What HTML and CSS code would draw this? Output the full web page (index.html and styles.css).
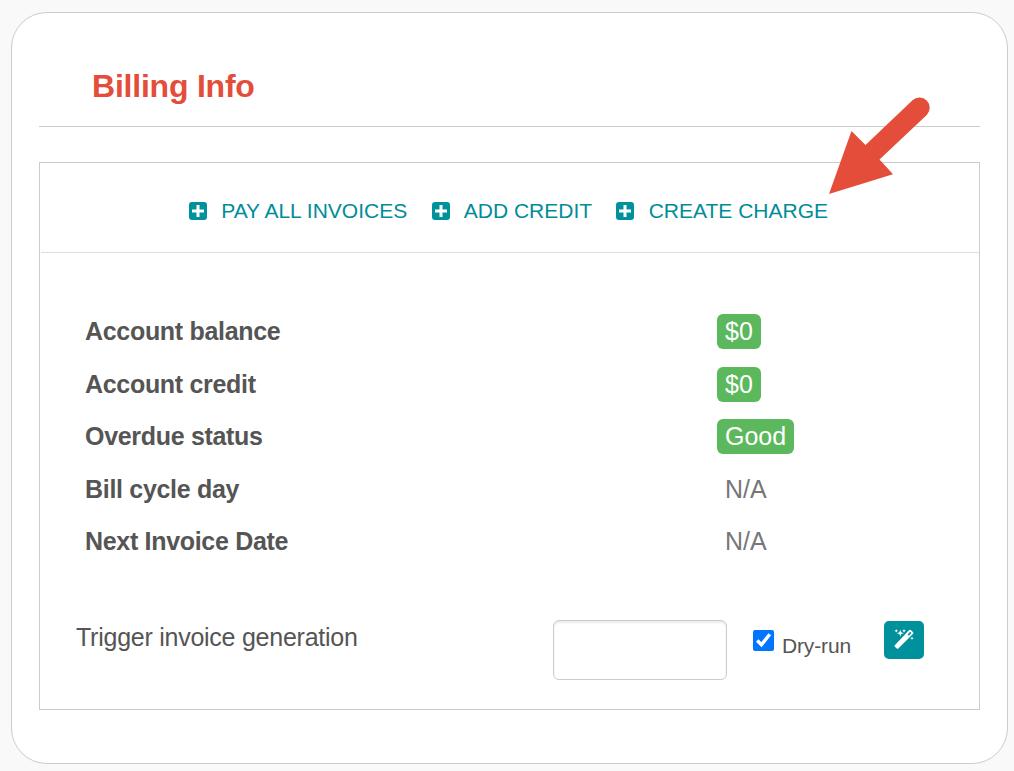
FILE: index.html
```html
<!DOCTYPE html>
<html lang="en">
<head>
<meta charset="utf-8">
<title>Billing Info</title>
<link rel="stylesheet" href="styles.css">
</head>
<body>
<svg class="defs" width="0" height="0" aria-hidden="true">
  <symbol id="plus" viewBox="0 0 18 18">
    <path fill-rule="evenodd" d="M3 0h12a3 3 0 0 1 3 3v12a3 3 0 0 1-3 3H3a3 3 0 0 1-3-3V3a3 3 0 0 1 3-3zM7.500 3v4.500H3v3h4.500V15h3v-4.500H15v-3h-4.500V3z"/>
  </symbol>
</svg>
<main class="card">
  <header class="card-header"><h1 class="title">Billing Info</h1></header>
  <section class="panel">
    <nav class="actions">
      <a class="action"><svg class="plus"><use href="#plus"/></svg><span>PAY ALL INVOICES</span></a>
      <a class="action"><svg class="plus"><use href="#plus"/></svg><span>ADD CREDIT</span></a>
      <a class="action"><svg class="plus"><use href="#plus"/></svg><span>CREATE CHARGE</span></a>
    </nav>
    <dl class="details">
      <dt>Account balance</dt><dd><span class="badge">$0</span></dd>
      <dt>Account credit</dt><dd><span class="badge">$0</span></dd>
      <dt>Overdue status</dt><dd><span class="badge">Good</span></dd>
      <dt>Bill cycle day</dt><dd><span class="value">N/A</span></dd>
      <dt>Next Invoice Date</dt><dd><span class="value">N/A</span></dd>
    </dl>
    <form class="trigger">
      <span class="trigger-label">Trigger invoice generation</span>
      <input class="date" type="text" aria-label="Date">
      <label class="dry"><input class="check" type="checkbox" checked><span class="dry-text">Dry-run</span></label>
      <button class="run" type="button" aria-label="Run">
        <svg width="20" height="20" viewBox="0 0 20 20" fill="#fff">
          <path fill-rule="evenodd" d="M.8 16.300 15 1.200q1.100-1 2.100 0l1.800 1.800q1 1.100 0 2.100L4.300 19.500q-.8.700-1.500 0L.8 17.700q-.6-.7 0-1.400zM13.600 5.400l1.300 1.300 2.500-2.700-1.200-1.200z"/>
          <path d="m6.300.8.9 2.500 2.500.9-2.500.9-.9 2.500-.9-2.500-2.500-.9 2.500-.9zM2.300 0l.6 1.200 1.200.6-1.200.6-.6 1.200-.6-1.200L.5 1.800l1.200-.6zM10 0l.6 1.200 1.200.6-1.200.6L10 3.600l-.6-1.200-1.200-.6 1.200-.6zM18 7.500l.5 1.300 1.300.5-1.300.5-.5 1.300-.5-1.300-1.300-.5 1.300-.5z"/>
        </svg>
      </button>
    </form>
  </section>
</main>
<svg class="pointer" width="104" height="100" viewBox="828 95 104 100" aria-hidden="true">
  <path fill="#e44d3a" d="M829 194 851.500 131 865.500 145 912.500 100.200A10.300 10.300 0 0 1 927 114.800L879.500 159.500 893 174.300z"/>
</svg>
</body>
</html>
```

FILE: styles.css
```css
* { box-sizing: border-box; }
body {
  margin: 0;
  height: 771px;
  padding: 12px 6px 7px 11px;
  overflow: hidden;
  background: #f9f9f9;
  color: #555;
  font-family: "Liberation Sans", Arial, sans-serif;
}
.defs { position: absolute; }
.card {
  height: 752px;
  padding: 0 27px;
  background: #fff;
  border: 1px solid #ccc;
  border-radius: 36px;
}
.card-header {
  height: 114px;
  padding: 55px 0 0 53px;
  border-bottom: 1px solid #ccc;
}
.title {
  margin: 0;
  font-size: 32px;
  line-height: 37px;
  letter-spacing: -.22px;
  color: #e44d3a;
}
.panel {
  height: 548px;
  margin-top: 35px;
  border: 1px solid #ccc;
}
.actions {
  display: flex;
  gap: 24.4px;
  height: 90px;
  margin-left: 1px;
  padding: 0 0 0 148px;
  border-bottom: 1px solid #ddd;
}
.action {
  display: flex;
  align-items: center;
  gap: 14.2px;
  height: 95px;
  font-size: 21px;
  color: #008c99;
  white-space: nowrap;
}
.action span { padding-top: 1px; }
.plus { width: 18px; height: 18px; fill: #00919d; }
.details {
  display: grid;
  grid-template-columns: 632px 1fr;
  grid-auto-rows: 52.5px;
  align-items: center;
  margin: 52.4px 0 0;
  padding-left: 45px;
  font-size: 25px;
}
.details dt { font-weight: bold; letter-spacing: -.31px; }
.details dd { margin: 0; }
.badge {
  display: block;
  width: fit-content;
  height: 35px;
  padding: 0 8px;
  border-radius: 6px;
  background: #5cb85c;
  color: #fff;
  line-height: 35px;
}
.value { padding-left: 8px; color: #777; }
.trigger {
  display: flex;
  align-items: flex-start;
  margin-top: 52.2px;
  padding-left: 36px;
}
.trigger-label {
  width: 477px;
  padding-top: 3px;
  font-size: 25px;
  line-height: 29px;
  letter-spacing: -.25px;
}
.date {
  width: 174px;
  height: 60px;
  border: 1px solid #ccc;
  border-radius: 6px;
  background: #fff;
  box-shadow: inset 0 2px 2px rgba(0, 0, 0, .075);
}
.dry {
  display: flex;
  width: 131px;
  margin-left: 26px;
}
.check { width: 21px; height: 21px; margin: 10px 8px 0 0; }
.dry-text { padding-top: 14px; font-size: 21px; line-height: 24px; letter-spacing: -.15px; }
.run {
  display: grid;
  place-items: center;
  width: 40px;
  height: 38px;
  margin-top: 1px;
  padding: 0 0 2px;
  border: 0;
  border-radius: 5px;
  background: #00919d;
}
.pointer { position: absolute; left: 828px; top: 95px; }
```
